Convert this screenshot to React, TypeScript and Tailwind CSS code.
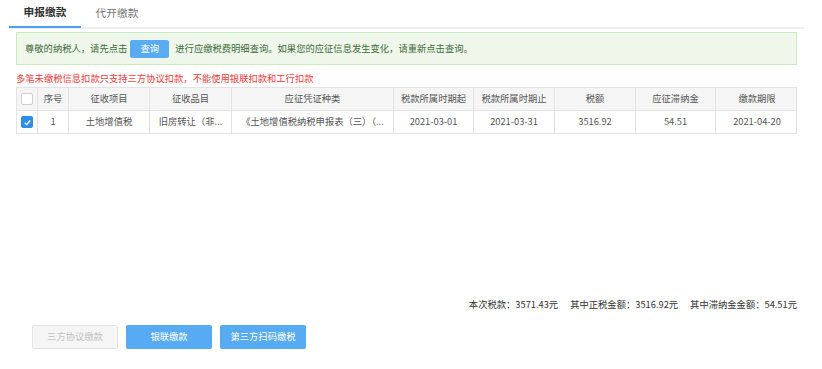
import React from "react";

const cols = "grid grid-cols-[21px_31px_81px_82px_162px_80px_81px_81px_80px_82px]";
const cell = "flex items-center justify-center border-r border-[#e3e3e3] overflow-hidden whitespace-nowrap";

export default function App() {
  const headers = ["序号", "征收项目", "征收品目", "应征凭证种类", "税款所属时期起", "税款所属时期止", "税额", "应征滞纳金", "缴款期限"];
  const row = ["1", "土地增值税", "旧房转让（非...", "《土地增值税纳税申报表（三）（...", "2021-03-01", "2021-03-31", "3516.92", "54.51", "2021-04-20"];
  return (
    <div className="w-[822px] h-[369px] bg-white text-[9.3px] text-[#555] relative" style={{ fontFamily: '"Microsoft YaHei","Noto Sans CJK SC",sans-serif' }}>
      {/* tabs */}
      <div className="ml-[9px] w-[795px] h-[29px] flex border-b-2 border-[#eeeeee]">
        <div className="w-[72px] h-[28px] flex items-center justify-center text-[10.7px] font-bold text-[#333] border-b-2 border-[#4a9ff0] pb-[1px]">申报缴款</div>
        <div className="w-[72px] h-[27px] flex items-center justify-center text-[10.7px] text-[#777]">代开缴款</div>
      </div>
      {/* notice */}
      <div className="ml-[16px] mt-[3px] w-[781px] h-[33px] border border-[#c9ebc0] bg-[#eef7ea] flex items-center pl-[8px] text-[#3f6b3a]">
        <span>尊敬的纳税人，请先点击</span>
        <span className="ml-[3px] w-[39px] h-[18px] bg-[#5aacf2] text-white flex items-center justify-center rounded-[2px]">查询</span>
        <span className="ml-[6px]">进行应缴税费明细查询。如果您的应征信息发生变化，请重新点击查询。</span>
      </div>
      {/* warning */}
      <div className="ml-[16px] mt-[7px] h-[14px] flex items-center text-[#f53a3a]">多笔未缴税信息扣款只支持三方协议扣款，不能使用银联扣款和工行扣款</div>
      {/* table */}
      <div className="ml-[16px] mt-[1px] w-[781px] border border-[#e3e3e3]">
        <div className={`${cols} h-[23px] bg-[#f5f5f5] border-b border-[#e3e3e3]`}>
          <div className={cell}>
            <span className="w-[12px] h-[12px] border border-[#cfcfcf] bg-white rounded-[2px]" />
          </div>
          {headers.map((h, i) => (
            <div key={i} className={`${cell} ${i === headers.length - 1 ? "border-r-0" : ""}`}>{h}</div>
          ))}
        </div>
        <div className={`${cols} h-[22px]`}>
          <div className={cell}>
            <span className="w-[12px] h-[12px] bg-[#2d8ce8] rounded-[2px] flex items-center justify-center">
              <svg width="9" height="9" viewBox="0 0 10 10"><path d="M2 5.2 L4.2 7.3 L8 2.8" stroke="white" strokeWidth="1.6" fill="none" /></svg>
            </span>
          </div>
          {row.map((h, i) => (
            <div key={i} className={`${cell} ${i === row.length - 1 ? "border-r-0" : ""}`}>{h}</div>
          ))}
        </div>
      </div>
      {/* summary */}
      <div className="absolute left-0 top-[298px] w-[797px] flex justify-end text-[#333] gap-[12px]">
        <span>本次税款：3571.43元</span>
        <span>其中正税金额：3516.92元</span>
        <span>其中滞纳金金额：54.51元</span>
      </div>
      {/* buttons */}
      <div className="absolute left-[32px] top-[325px] flex gap-[8px]">
        <div className="w-[86px] h-[24px] flex items-center justify-center bg-[#f5f5f5] border border-[#e4e4e4] text-[#c2c2c2] rounded-[2px]">三方协议缴款</div>
        <div className="w-[86px] h-[24px] flex items-center justify-center bg-[#56abf3] text-white rounded-[2px]">银联缴款</div>
        <div className="w-[86px] h-[24px] flex items-center justify-center bg-[#56abf3] text-white rounded-[2px]">第三方扫码缴税</div>
      </div>
    </div>
  );
}
